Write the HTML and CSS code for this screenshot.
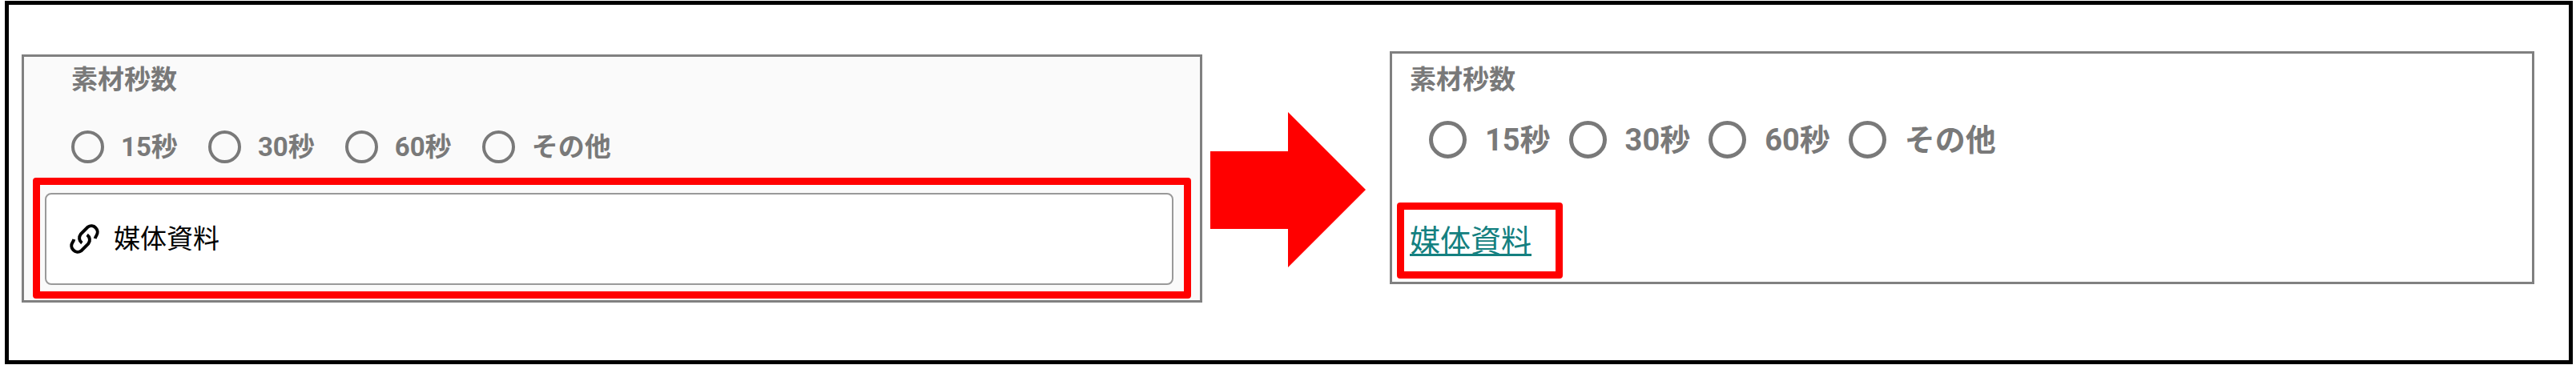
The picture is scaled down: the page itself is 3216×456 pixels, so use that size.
FILE: index.html
```html
<!DOCTYPE html>
<html lang="ja">
<head>
<meta charset="utf-8">
<title>素材秒数</title>
<link rel="stylesheet" href="styles.css">
</head>
<body>
<main class="frame">
  <section class="panel panel-before">
    <fieldset class="field">
      <legend class="title">素材秒数</legend>
      <div class="options">
        <label class="option"><input class="radio" type="radio" name="before">15秒</label>
        <label class="option"><input class="radio" type="radio" name="before">30秒</label>
        <label class="option"><input class="radio" type="radio" name="before">60秒</label>
        <label class="option"><input class="radio" type="radio" name="before">その他</label>
      </div>
    </fieldset>
    <div class="highlight highlight-card">
      <button class="card" type="button">
        <svg class="link-icon" viewBox="47 57 117 117" aria-hidden="true">
          <path d="M96 131A23 23 0 0 1 91 98L118 71A23 23 0 0 1 150 103Q147 107 145 114"/>
          <path d="M115 100A23 23 0 0 1 120 133L93 160A23 23 0 0 1 61 128Q64 124 66 117"/>
        </svg>
        <span>媒体資料</span>
      </button>
    </div>
  </section>

  <svg class="arrow" viewBox="0 0 194 194" aria-hidden="true">
    <path d="M0 49H97V0L194 97L97 194V146H0Z"/>
  </svg>

  <section class="panel panel-after">
    <fieldset class="field">
      <legend class="title">素材秒数</legend>
      <div class="options">
        <label class="option"><input class="radio" type="radio" name="after">15秒</label>
        <label class="option"><input class="radio" type="radio" name="after">30秒</label>
        <label class="option"><input class="radio" type="radio" name="after">60秒</label>
        <label class="option"><input class="radio" type="radio" name="after">その他</label>
      </div>
    </fieldset>
    <div class="highlight highlight-link">
      <a class="link" href="#">媒体資料</a>
    </div>
  </section>
</main>
</body>
</html>
```
FILE: styles.css
```css
* {
  box-sizing: border-box;
}

body {
  margin: 0;
  padding: 1px 4px 1px 6px;
  background: #fff;
  font-family: Roboto, "Noto Sans CJK JP", sans-serif;
  font-size: 33px;
  line-height: 40px;
}

.frame {
  display: grid;
  grid-template-columns: minmax(0, 1474fr) auto minmax(0, 1429fr);
  align-items: start;
  min-height: calc(100vh - 2px);
  padding: 58px 43px 58px 16px;
  border: 5px solid #000;
}

.panel {
  border: 3px solid #808080;
}

.panel-before {
  margin-top: 4px;
  padding: 9px 11px 2px;
  background: #fafafa;
}

.panel-after {
  padding: 13px 6px 4px;
}

.field {
  margin: 0;
  padding: 0;
  border: 0;
  color: #797979;
  font-weight: 700;
}

.title {
  padding: 0;
}

.options {
  display: flex;
  flex-wrap: wrap;
}

.option {
  display: flex;
  align-items: center;
}

.radio {
  appearance: none;
  flex: none;
  margin: 0;
  border: 4px solid #797979;
  border-radius: 50%;
}

.panel-before .field {
  padding-left: 48px;
}

.panel-before .options {
  gap: 38px;
  margin-top: 43px;
}

.panel-before .option {
  gap: 21px;
}

.panel-before .radio {
  width: 41px;
  height: 41px;
}

.panel-after .title {
  padding-left: 16px;
}

.panel-after .options {
  gap: 23px;
  margin-top: 31px;
  padding-left: 40px;
  font-size: 38px;
}

.panel-after .option {
  gap: 23px;
}

.panel-after .radio {
  width: 47px;
  height: 47px;
  border-width: 5px;
}

.highlight {
  border: 9px solid #f00;
  border-radius: 4px;
}

.highlight-card {
  margin-top: 18px;
  padding: 10px 13px 8px 6px;
}

.card {
  display: flex;
  align-items: center;
  gap: 17px;
  width: 100%;
  padding: 36px 28px;
  border: 2px solid #999;
  border-radius: 8px;
  background: #fff;
  color: #000;
  font: inherit;
  line-height: 39px;
  text-align: left;
}

.link-icon {
  flex: none;
  width: 39px;
  height: 39px;
  fill: none;
  stroke: #000;
  stroke-width: 12;
}

.arrow {
  width: 194px;
  height: 194px;
  margin: 76px 30px 0 10px;
  fill: #f00;
}

.highlight-link {
  width: fit-content;
  margin-top: 55px;
  padding: 19px 30px 18px 7px;
}

.link {
  display: block;
  color: #148080;
  font-size: 38px;
  text-decoration-thickness: 3px;
  text-underline-offset: 3px;
  text-decoration-skip-ink: none;
}
```
